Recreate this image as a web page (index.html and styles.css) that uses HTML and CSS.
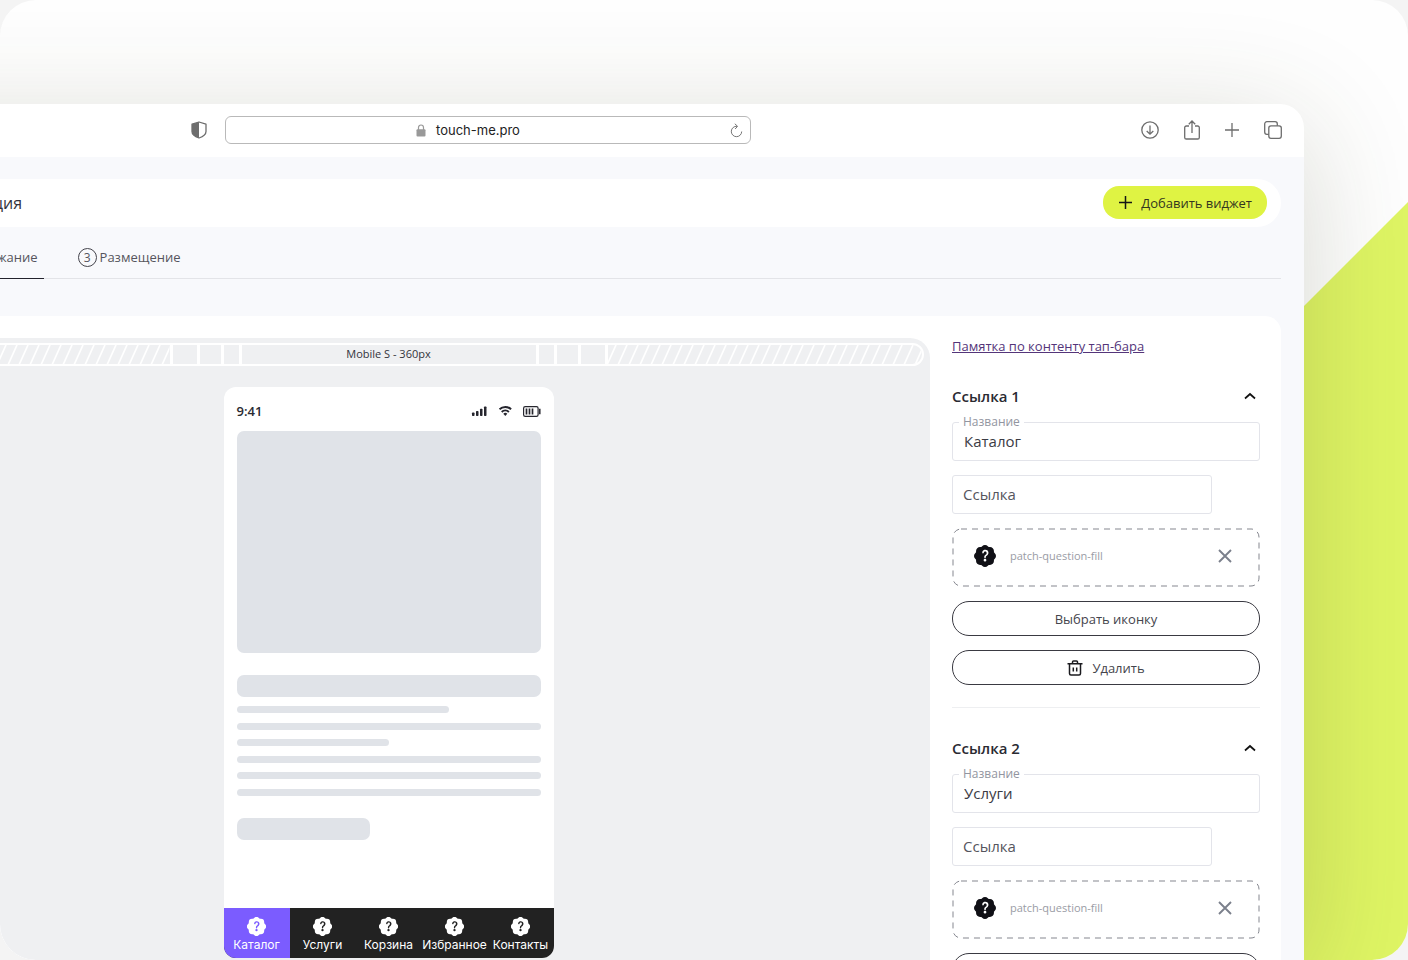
FILE: index.html
```html
<!DOCTYPE html>
<html lang="ru">
<head>
<meta charset="utf-8">
<title>touch-me.pro</title>
<link rel="stylesheet" href="styles.css">
</head>
<body>
<svg class="sprite" aria-hidden="true">
  <symbol id="patch" viewBox="0 0 16 16"><path fill="currentColor" d="M5.933.87a2.89 2.89 0 0 1 4.134 0l.622.638.89-.011a2.89 2.89 0 0 1 2.924 2.924l-.01.89.636.622a2.89 2.89 0 0 1 0 4.134l-.637.622.011.89a2.89 2.89 0 0 1-2.924 2.924l-.89-.01-.622.636a2.89 2.89 0 0 1-4.134 0l-.622-.637-.89.011a2.89 2.89 0 0 1-2.924-2.924l.01-.89-.636-.622a2.89 2.89 0 0 1 0-4.134l.637-.622-.011-.89a2.89 2.89 0 0 1 2.924-2.924l.89.01zM7.002 11a1 1 0 1 0 2 0 1 1 0 0 0-2 0m1.602-2.027c.04-.534.198-.815.846-1.26.674-.475 1.05-1.09 1.05-1.986 0-1.325-.92-2.227-2.262-2.227-1.02 0-1.792.492-2.1 1.29A1.7 1.7 0 0 0 6 5.480c0 .393.203.64.545.64.272 0 .455-.147.564-.51.158-.592.525-.915 1.074-.915.61 0 1.030.446 1.030 1.084 0 .563-.208.885-.822 1.325-.619.433-.926.914-.926 1.640v.111c0 .428.208.745.585.745.336 0 .504-.24.554-.627"/></symbol>
  <symbol id="chevron" viewBox="0 0 12 8"><path d="M1 6.500 6 2l5 4.500" fill="none" stroke="#111" stroke-width="1.700"/></symbol>
  <symbol id="cross" viewBox="0 0 14 14"><path d="M1 1l12 12M13 1 1 13" fill="none" stroke="#7b808c" stroke-width="1.900"/></symbol>
</svg>
<div class="stage">
  <div class="accent"></div>
  <div class="window">
    <div class="toolbar">
      <svg class="shield" width="16" height="18" viewBox="0 0 16 18"><path d="M8 1 15 3.200V10.500C15 13.500 11.500 15.800 8 17 4.500 15.800 1 13.500 1 10.500V3.200Z" fill="none" stroke="#6d6d6d" stroke-width="1.300" stroke-linejoin="round"/><path d="M8 1V17C4.500 15.800 1 13.500 1 10.500V3.200Z" fill="#6d6d6d"/></svg>
      <div class="address">
        <span class="url">
          <svg width="10" height="13" viewBox="0 0 10 13"><rect x=".5" y="5.300" width="9" height="7.200" rx="1" fill="#999"/><path d="M2.500 6V3.500a2.500 2.500 0 0 1 5 0V6" fill="none" stroke="#999" stroke-width="1.200"/></svg>
          <span>touch-me.pro</span>
        </span>
        <button class="icon-button" aria-label="Обновить"><svg width="13" height="15" viewBox="0 0 13 15"><path d="M7 3.300a5.200 5.200 0 1 0 4.700 5.200M4.800.8 7.600 3.300 5.100 6" fill="none" stroke="#777" stroke-width="1"/></svg></button>
      </div>
      <div class="actions">
        <button class="icon-button" aria-label="Загрузки"><svg width="18" height="20" viewBox="0 0 18 20"><g fill="none" stroke="#6d6d6d" stroke-width="1.300"><circle cx="9" cy="10" r="8.200"/><path d="M9 5.500v8.500M5.700 11 9 14.200 12.300 11"/></g></svg></button>
        <button class="icon-button" aria-label="Поделиться"><svg width="16" height="20" viewBox="0 0 16 20"><path d="M5 6H2.300A1.600 1.600 0 0 0 .7 7.600V17.400A1.600 1.600 0 0 0 2.300 19H13.700a1.600 1.600 0 0 0 1.600-1.600V7.600A1.600 1.600 0 0 0 13.700 6H11M8 13V1.200M4.800 4.200 8 1l3.200 3.200" fill="none" stroke="#6d6d6d" stroke-width="1.300"/></svg></button>
        <button class="icon-button" aria-label="Новая вкладка"><svg width="14" height="20" viewBox="0 0 14 20"><path d="M7 3v14M0 10h14" fill="none" stroke="#6d6d6d" stroke-width="1.300"/></svg></button>
        <button class="icon-button" aria-label="Вкладки"><svg width="18" height="20" viewBox="0 0 18 20"><g fill="none" stroke="#6d6d6d" stroke-width="1.300"><rect x="4.800" y="5.800" width="12.500" height="12.500" rx="2.200"/><path d="M4.800 14.300H2.900A2.200 2.200 0 0 1 .7 12.100V3.900A2.200 2.200 0 0 1 2.900 1.700H11.100A2.200 2.200 0 0 1 13.300 3.900V5.800"/></g></svg></button>
      </div>
    </div>
    <div class="app">
      <header class="header">
        <span class="title">ция</span>
        <button class="add"><svg width="13" height="13" viewBox="0 0 13 13"><path d="M6.500 0v13M0 6.500h13" stroke="#161616" stroke-width="1.500"/></svg>Добавить виджет</button>
      </header>
      <nav class="tabs">
        <a class="tab active" href="#content">жание</a>
        <a class="tab" href="#place"><span class="num">3</span>Размещение</a>
      </nav>
      <main class="card">
        <section class="preview">
          <div class="ruler">
            <svg class="hatch"><defs><pattern id="lines" width="11" height="20" patternUnits="userSpaceOnUse"><path d="M-1 20 8 0M10 20 19 0M-12 20-3 0" stroke="#fff" stroke-width="1.700"/></pattern></defs><rect width="100%" height="100%" fill="url(#lines)"/></svg>
            <i class="cell c1"></i><i class="cell c2"></i><i class="cell c3"></i>
            <span class="cell size">Mobile S - 360px</span>
            <i class="cell c3"></i><i class="cell c2"></i><i class="cell c1"></i>
            <svg class="hatch edge"><rect width="100%" height="100%" fill="url(#lines)"/></svg>
          </div>
          <div class="phone">
            <div class="screen">
              <div class="status">
                <span>9:41</span>
                <svg width="70" height="14" viewBox="0 0 70 14"><g fill="#26262e"><rect x="1" y="8.500" width="2.500" height="3.500" rx=".7"/><rect x="5" y="7" width="2.500" height="5" rx=".7"/><rect x="9" y="4.800" width="2.500" height="7.200" rx=".7"/><rect x="13" y="2.500" width="2.500" height="9.500" rx=".7"/></g><g fill="none" stroke="#26262e" stroke-width="1.900"><path d="M28.500 5.300a8.300 8.300 0 0 1 11.600 0M30.700 8a5.200 5.200 0 0 1 7.200 0"/></g><path d="M32.300 9.700a3 3 0 0 1 4 0L34.300 12Z" fill="#26262e"/><rect x="52.600" y="2.600" width="14.500" height="9.800" rx="1.600" fill="none" stroke="#26262e" stroke-width="1.200"/><path d="M55.500 4.500v6M58.500 4.500v6M61.500 4.500v6" stroke="#26262e" stroke-width="1.700"/><path d="M68.800 4.800v5.400" stroke="#26262e" stroke-width="1.500"/></svg>
              </div>
              <div class="block image"></div>
              <div class="block heading"></div>
              <div class="lines">
                <div class="block line w70"></div>
                <div class="block line"></div>
                <div class="block line w50"></div>
                <div class="block line"></div>
                <div class="block line"></div>
                <div class="block line"></div>
              </div>
              <div class="block heading short"></div>
            </div>
            <nav class="tapbar">
              <a href="#1" class="current"><svg><use href="#patch"/></svg>Каталог</a>
              <a href="#2"><svg><use href="#patch"/></svg>Услуги</a>
              <a href="#3"><svg><use href="#patch"/></svg>Корзина</a>
              <a href="#4"><svg><use href="#patch"/></svg>Избранное</a>
              <a href="#5"><svg><use href="#patch"/></svg>Контакты</a>
            </nav>
          </div>
        </section>
        <aside class="panel">
          <a class="memo" href="#memo">Памятка по контенту тап-бара</a>
          <section class="group">
            <div class="group-head"><h2>Ссылка 1</h2><button class="icon-button" aria-label="Свернуть"><svg width="12" height="8"><use href="#chevron"/></svg></button></div>
            <div class="field"><label for="name1">Название</label><input id="name1" type="text" value="Каталог"></div>
            <input class="link" type="text" placeholder="Ссылка" aria-label="Ссылка">
            <div class="icon-box">
              <svg class="dashes"><rect x="1" y="1" rx="8"/></svg>
              <svg class="patch"><use href="#patch"/></svg><span>patch-question-fill</span>
              <button class="icon-button" aria-label="Убрать"><svg width="14" height="14"><use href="#cross"/></svg></button>
            </div>
            <button class="outline">Выбрать иконку</button>
            <button class="outline"><svg width="16" height="16" viewBox="0 0 16 16"><g fill="none" stroke="#1b1b1f" stroke-width="1.500"><path d="M.5 3.800h15M2.500 4v9.500A1.500 1.500 0 0 0 4 15h8a1.500 1.500 0 0 0 1.500-1.500V4M5.500 3.500V2A1 1 0 0 1 6.500 1h3A1 1 0 0 1 10.500 2v1.500M6.300 7.500v4M9.700 7.500v4"/></g></svg>Удалить</button>
          </section>
          <section class="group">
            <div class="group-head"><h2>Ссылка 2</h2><button class="icon-button" aria-label="Свернуть"><svg width="12" height="8"><use href="#chevron"/></svg></button></div>
            <div class="field"><label for="name2">Название</label><input id="name2" type="text" value="Услуги"></div>
            <input class="link" type="text" placeholder="Ссылка" aria-label="Ссылка">
            <div class="icon-box">
              <svg class="dashes"><rect x="1" y="1" rx="8"/></svg>
              <svg class="patch"><use href="#patch"/></svg><span>patch-question-fill</span>
              <button class="icon-button" aria-label="Убрать"><svg width="14" height="14"><use href="#cross"/></svg></button>
            </div>
            <button class="outline" aria-label="Выбрать иконку"></button>
          </section>
        </aside>
      </main>
    </div>
  </div>
</div>
</body>
</html>
```
FILE: styles.css
```css
* { box-sizing: border-box; }
body {
  margin: 0;
  background: #f4f4f4;
  font-family: "Open Sans", "Noto Sans", sans-serif;
  font-size: 13px;
  color: #3b3b44;
}
button, input { font: inherit; color: inherit; }
a { color: inherit; text-decoration: none; }
.sprite { position: absolute; width: 0; height: 0; }
.icon-button { display: flex; padding: 0; border: 0; background: none; }
.stage {
  position: relative;
  height: 100vh;
  overflow: hidden;
  padding: 104px 104px 0 0;
  border-radius: 36px;
  background: #fefefe;
}
.accent {
  position: absolute;
  top: 202px;
  right: 0;
  bottom: 0;
  width: 360px;
  background: #dff564;
  clip-path: polygon(100% 0, 100% 100%, 0 100%, 0 360px);
}
/* The window continues past the left edge of the stage. */
.window {
  position: relative;
  margin-left: -198px;
  height: 100%;
  display: flex;
  flex-direction: column;
  border-radius: 0 24px 0 0;
  background: #fff;
  box-shadow: 0 24px 120px rgba(60, 65, 30, .2);
}
.toolbar {
  display: flex;
  align-items: center;
  height: 53px;
  padding: 0 22px 1px 389px;
  flex: none;
}
.address {
  display: flex;
  align-items: center;
  width: 526px;
  height: 28px;
  margin-left: 18px;
  padding-right: 7px;
  border: 1px solid #b9b9b9;
  border-radius: 6px;
}
.url {
  flex: 1;
  display: flex;
  align-items: center;
  justify-content: center;
  gap: 10px;
  padding-right: 20px;
  font: 13px/16px Inter, sans-serif;
  color: #222;
}
.actions { display: flex; gap: 25px; margin-left: auto; }
.app {
  flex: 1;
  min-height: 0;
  display: flex;
  flex-direction: column;
  padding: 22px 23px 0;
  background: #f8f9fc;
}
.header {
  flex: none;
  display: flex;
  align-items: center;
  justify-content: space-between;
  height: 48px;
  padding: 0 14px 1px 168px;
  border-radius: 24px;
  background: #fff;
}
.title { font-size: 16px; color: #33333d; }
.add {
  display: flex;
  align-items: center;
  gap: 9px;
  height: 33px;
  padding: 0 15px 0 16px;
  border: 0;
  border-radius: 16px;
  background: #dff343;
  color: #33361f;
}
.tabs {
  flex: none;
  display: flex;
  gap: 34px;
  height: 52px;
  padding-left: 166px;
  border-bottom: 1px solid #e3e4e8;
}
.tab {
  display: flex;
  align-items: center;
  gap: 3px;
  height: 52px;
  padding-top: 8px;
  margin-bottom: -1px;
  color: #55555d;
}
.active { padding: 9px 6px 0; border-bottom: 1px solid #22222c; }
.num {
  display: flex;
  align-items: center;
  justify-content: center;
  width: 19px;
  height: 19px;
  border: 1px solid #44444c;
  border-radius: 50%;
  font-size: 12px;
}
.card {
  flex: 1;
  min-height: 0;
  display: flex;
  gap: 22px;
  margin-top: 37px;
  padding: 22px 21px 0 22px;
  border-radius: 16px 16px 0 0;
  background: #fff;
}
.preview {
  flex: 1;
  display: flex;
  flex-direction: column;
  align-items: center;
  padding: 5px 6px 0;
  border-radius: 20px 20px 0 0;
  background: #eff0f2;
}
.ruler {
  flex: none;
  display: flex;
  width: 100%;
  height: 23px;
  border: 2px solid #fff;
  border-radius: 12px;
  overflow: hidden;
}
.hatch { flex: 1; min-width: 0; height: 19px; }
.cell { border-left: 3px solid #fff; }
.edge { border-left: 3px solid #fff; }
.c1 { width: 27px; }
.c2 { width: 24px; }
.c3 { width: 18px; }
.size {
  width: 297px;
  text-align: center;
  font-size: 11px;
  line-height: 18px;
  color: #33333b;
}
.phone {
  flex: none;
  width: 330px;
  margin-top: 21px;
  border-radius: 12px;
  overflow: hidden;
  background: #fff;
}
.screen { padding: 13px 13px 68px; }
.status {
  display: flex;
  justify-content: space-between;
  align-items: center;
  height: 22px;
  font-size: 13px;
  font-weight: 600;
  color: #2b2b33;
}
.block { border-radius: 7px; background: #e0e3e8; }
.image { height: 222px; margin-top: 9px; }
.heading { height: 22px; margin-top: 22px; }
.lines { display: grid; align-content: space-between; height: 90px; margin-top: 9px; }
.line { height: 7px; border-radius: 4px; }
.w70 { width: 70%; }
.w50 { width: 50%; }
.short { width: 44%; }
.tapbar {
  display: grid;
  grid-template-columns: repeat(5, minmax(0, 1fr));
  background: #222;
  color: #fff;
  font: 12px/14px Inter, "Open Sans", sans-serif;
}
.tapbar a {
  display: flex;
  flex-direction: column;
  align-items: center;
  gap: 2px;
  padding: 9px 0 6px;
}
.tapbar svg { width: 19px; height: 19px; }
.tapbar .current { background: #7b5cff; }
.panel { width: 308px; color: #3b3b44; }
.memo { display: block; line-height: 17px; padding-bottom: 1px; color: #54357a; text-decoration: underline; }
.group {
  display: flex;
  flex-direction: column;
  gap: 14px;
  padding-bottom: 22px;
  border-bottom: 1px solid #eeeff1;
}
.group-head {
  display: flex;
  align-items: center;
  justify-content: space-between;
  height: 23px;
  margin-top: 29px;
  padding: 0 4px 1px 0;
}
h2 { margin: 0; font-size: 15px; font-weight: 600; color: #2a2a32; }
.field { position: relative; }
.field label {
  position: absolute;
  top: -8px;
  left: 7px;
  padding: 0 4px;
  background: #fff;
  font-size: 12px;
  line-height: 16px;
  color: #9295a0;
}
input {
  display: block;
  width: 100%;
  height: 39px;
  padding: 0 11px 1px;
  border: 1px solid #e3e4ea;
  border-radius: 3px;
  background: #fff;
  font-size: 15px;
}
.link { width: 260px; padding: 0 10px 2px; }
.link::placeholder { color: #55555d; opacity: 1; }
.icon-box {
  position: relative;
  display: flex;
  align-items: center;
  gap: 14px;
  height: 59px;
  padding: 0 28px 3px 22px;
}
.icon-box .icon-button { margin-left: auto; }
.icon-box span { font-size: 11px; line-height: 14px; color: #9a9ca5; }
.dashes { position: absolute; inset: 0; width: 100%; height: 100%; }
.dashes rect {
  width: calc(100% - 2px);
  height: calc(100% - 2px);
  fill: none;
  stroke: #85878f;
  stroke-dasharray: 6 5;
}
.patch { width: 22px; height: 22px; color: #101016; }
.outline {
  display: flex;
  align-items: center;
  justify-content: center;
  gap: 9px;
  width: 100%;
  height: 35px;
  border: 1px solid #3a3a42;
  border-radius: 17px;
  background: #fff;
  color: #44444c;
}
```
